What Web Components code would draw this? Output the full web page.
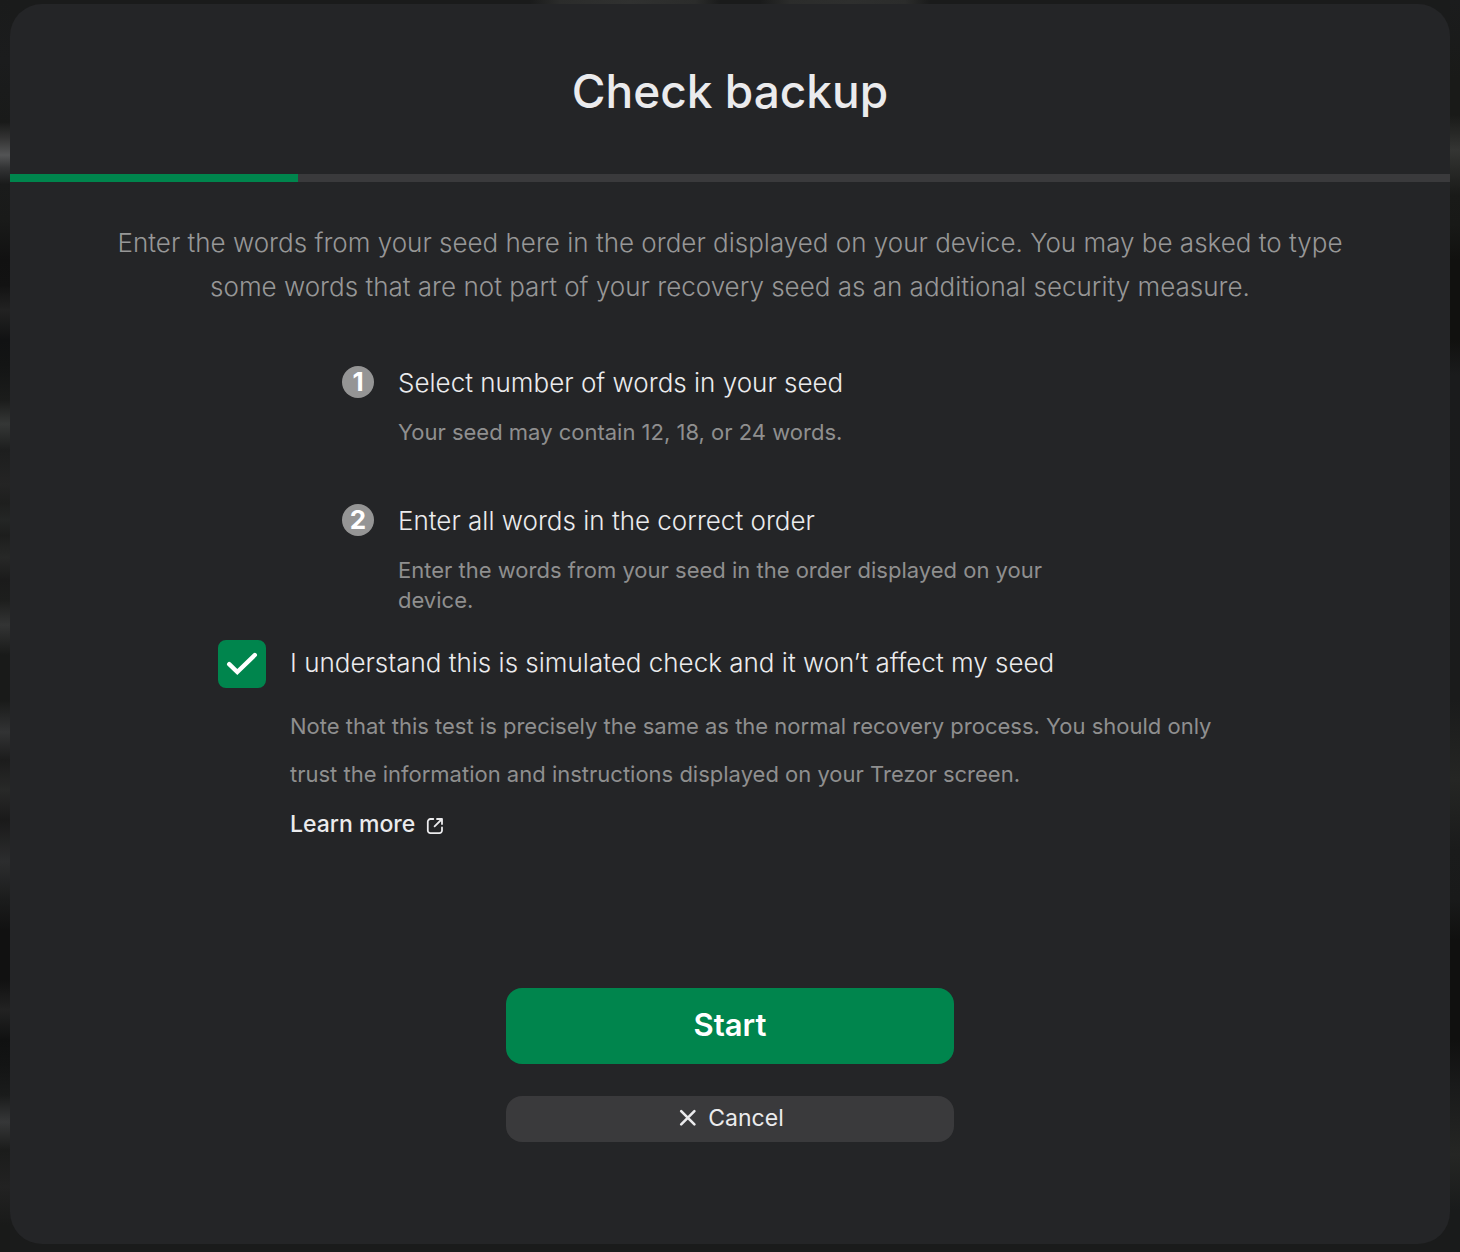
<!DOCTYPE html>
<html lang="en">
<head>
<meta charset="utf-8">
<meta name="viewport" content="width=device-width, initial-scale=1">
<title>Check backup</title>
<style>
  :root {
    --surface: #242527;
    --raised: #3a3a3c;
    --green: #00854d;
    --text: #ebebed;
    --muted: #8f8f8f;
  }
  body {
    margin: 0;
    background: #1a1b1b;
    color: var(--text);
    font-family: Inter, "Liberation Sans", sans-serif;
    font-weight: 300;
  }
</style>
</head>
<body>
<modal-backdrop>
  <modal-card>
    <h1 slot="heading">Check backup</h1>
    <step-progress slot="progress" value="1" max="5"></step-progress>
    <intro-text>Enter the words from your seed here in the order displayed on your device. You may be asked to type some words that are not part of your recovery seed as an additional security measure.</intro-text>
    <step-list>
      <step-item number="1">
        Select number of words in your seed
        <span slot="detail">Your seed may contain 12, 18, or 24 words.</span>
      </step-item>
      <step-item number="2">
        Enter all words in the correct order
        <span slot="detail">Enter the words from your seed in the order displayed on your device.</span>
      </step-item>
    </step-list>
    <consent-check>
      I understand this is simulated check and it won’t affect my seed
      <span slot="note">Note that this test is precisely the same as the normal recovery process. You should only trust the information and instructions displayed on your Trezor screen.</span>
      <external-link slot="link" href="#learn">Learn more</external-link>
    </consent-check>
    <action-button slot="actions" variant="primary">Start</action-button>
    <action-button slot="actions" variant="secondary" icon="cross">Cancel</action-button>
  </modal-card>
</modal-backdrop>

<script>
  const define = (name, html, setup) => {
    const template = document.createElement('template');
    template.innerHTML = html;
    customElements.define(name, class extends HTMLElement {
      constructor() {
        super();
        this.attachShadow({ mode: 'open' }).append(template.content.cloneNode(true));
      }
      connectedCallback() {
        if (setup) setup(this, this.shadowRoot);
      }
    });
  };

  // Dimmed page behind the dialog, with its out-of-focus content along the edges.
  define('modal-backdrop', `
    <style>
      :host {
        display: block;
        box-sizing: border-box;
        min-height: 100vh;
        padding: 4px 10px 8px;
        background:
          linear-gradient(90deg, transparent 530px, #2b2c2b 560px, #303130 630px, #2b2c2b 695px, transparent 720px, transparent 760px, #2b2c2b 790px, #2e2f2e 850px, #2b2c2b 905px, transparent 930px) 0 0 / 100% 4px no-repeat,
          linear-gradient(#1a1b1b 0, #1b1c1d 60px, #191a19 122px, #333 138px, #535455 155px, #333435 168px, #1a1b1b 184px, #191a19 220px, #111 260px, #121212 285px, #222 310px, #111213 340px, #131414 365px, #1b1c1b 400px, #353736 424px, #1d1e1e 450px, #242424 484px, #1e1f1e 503px, #242625 520px, #1d1e1d 535px, #272827 557px, #1b1b1b 580px, #1d1e1d 600px, #333434 625px, #191a19 655px, #191a19 700px, #323334 732px, #1c1c1c 760px, #282928 790px, #1a1a1a 820px, #2c2d2e 862px, #1b1c1c 900px, #111 930px, #111 980px, #222 1010px, #101111 1040px, #131414 1065px, #1a1b1b 1095px, #363738 1122px, #1b1c1b 1150px, #222 1187px, #191a19 1225px) 0 0 / 10px 100% no-repeat,
          linear-gradient(#1b1c1d 0, #191a18 80px, #191a18 115px, #343533 150px, #191a18 195px, #181917 225px, #11110f 260px, #11110f 340px, #1a1b1c 375px, #1a1b1b 700px, #252624 780px, #1a1b1b 850px, #191a1a 900px, #10100f 940px, #10100f 1040px, #191a1a 1085px, #252624 1155px, #191b1b 1210px) 100% 0 / 10px 100% no-repeat,
          #1a1b1b;
      }
    </style>
    <slot></slot>`);

  define('modal-card', `
    <style>
      :host { display: block; }
      section {
        display: flex;
        flex-direction: column;
        box-sizing: border-box;
        min-height: calc(100vh - 12px);
        background: var(--surface);
        border-radius: 32px;
        overflow: hidden;
      }
      header { padding: 55px 32px 51px; text-align: center; }
      ::slotted(h1) { margin: 0; font-size: 46px; line-height: 64px; font-weight: 500; }
      main { display: flex; flex-direction: column; align-items: center; padding: 39px 80px 0; }
      footer {
        display: flex;
        flex-direction: column;
        align-items: center;
        gap: 32px;
        margin-top: auto;
        padding: 32px 32px 102px;
      }
    </style>
    <section role="dialog" aria-label="Check backup">
      <header><slot name="heading"></slot></header>
      <slot name="progress"></slot>
      <main><slot></slot></main>
      <footer><slot name="actions"></slot></footer>
    </section>`);

  define('step-progress', `
    <style>
      :host { display: block; }
      progress { display: block; width: 100%; height: 8px; border: 0; appearance: none; -webkit-appearance: none; background: var(--raised); }
      progress::-webkit-progress-bar { background: var(--raised); }
      progress::-webkit-progress-value { background: var(--green); }
    </style>
    <progress aria-label="Progress"></progress>`,
    (host, root) => {
      const bar = root.querySelector('progress');
      bar.max = Number(host.getAttribute('max'));
      bar.value = Number(host.getAttribute('value'));
    });

  define('intro-text', `
    <style>
      :host { display: block; max-width: 1260px; }
      p { margin: 0; color: #979797; font-size: 26px; line-height: 44px; text-align: center; }
    </style>
    <p><slot></slot></p>`);

  define('step-list', `
    <style>
      :host { display: block; width: 100%; max-width: 776px; margin-top: 52px; }
      div { display: flex; flex-direction: column; gap: 52px; }
    </style>
    <div role="list"><slot></slot></div>`);

  define('step-item', `
    <style>
      :host { display: block; }
      .row { display: flex; align-items: flex-start; gap: 24px; }
      .badge {
        flex: none;
        width: 32px;
        margin-top: 5px;
        border-radius: 50%;
        background: #959595;
        color: #fff;
        font-size: 26px;
        line-height: 32px;
        font-weight: 700;
        text-align: center;
      }
      .title { font-size: 26px; line-height: 44px; }
      .detail { max-width: 700px; margin-top: 12px; color: var(--muted); font-size: 22px; line-height: 30px; font-weight: 400; }
    </style>
    <div class="row" role="listitem">
      <div class="badge"></div>
      <div>
        <div class="title"><slot></slot></div>
        <div class="detail"><slot name="detail"></slot></div>
      </div>
    </div>`,
    (host, root) => { root.querySelector('.badge').textContent = host.getAttribute('number'); });

  define('consent-check', `
    <style>
      :host { display: block; width: 100%; max-width: 1024px; margin-top: 25px; }
      .grid { display: grid; grid-template-columns: 48px 1fr; column-gap: 24px; }
      .box { display: grid; width: 48px; height: 48px; }
      .box > * { grid-area: 1 / 1; }
      input { appearance: none; -webkit-appearance: none; width: 48px; height: 48px; margin: 0; border: 2px solid var(--raised); border-radius: 8px; }
      input:checked { background: var(--green); border-color: var(--green); }
      svg { width: 48px; height: 48px; visibility: hidden; pointer-events: none; }
      input:checked + svg { visibility: visible; }
      label { font-size: 26px; line-height: 46px; }
      .more { grid-column: 2; margin-top: 14px; }
      p { margin: 0; color: var(--muted); font-size: 22px; line-height: 48px; font-weight: 400; }
    </style>
    <div class="grid">
      <span class="box">
        <input type="checkbox" id="agree" checked>
        <svg viewBox="0 0 48 48" fill="none" stroke="#fff" stroke-width="4.4" stroke-linecap="round" aria-hidden="true"><path d="M11.2 24.2 19.3 32 36.8 15"/></svg>
      </span>
      <label for="agree"><slot></slot></label>
      <div class="more">
        <p><slot name="note"></slot></p>
        <slot name="link"></slot>
      </div>
    </div>`);

  define('external-link', `
    <style>
      :host { display: block; }
      a { display: inline-flex; align-items: center; gap: 12px; color: var(--text); font-size: 23px; line-height: 52px; font-weight: 500; text-decoration: none; }
      svg { width: 16px; height: 16px; margin-top: 4px; overflow: visible; }
    </style>
    <a><slot></slot><svg viewBox="0 0 16 16" fill="none" stroke="currentColor" stroke-width="1.8" stroke-linecap="round" stroke-linejoin="round" aria-hidden="true"><path d="M6.3 1H3.4A2.6 2.6 0 0 0 .8 3.6v9A2.6 2.6 0 0 0 3.4 15.2h9a2.6 2.6 0 0 0 2.6-2.6V9.4M10 1h5v5M15 1 7.6 8.4"/></svg></a>`,
    (host, root) => { root.querySelector('a').href = host.getAttribute('href'); });

  define('action-button', `
    <style>
      :host { display: block; width: 100%; max-width: 448px; }
      button {
        display: flex;
        align-items: center;
        justify-content: center;
        gap: 8px;
        width: 100%;
        border: 0;
        border-radius: 16px;
        font-family: inherit;
        cursor: pointer;
      }
      :host([variant="primary"]) button { padding: 15px 16px 17px; background: var(--green); color: #fff; font-size: 31px; line-height: 44px; font-weight: 600; }
      :host([variant="secondary"]) button { padding: 7px 16px 9px; background: var(--raised); color: var(--text); font-size: 23px; line-height: 30px; font-weight: 400; }
      svg { display: none; width: 24px; height: 24px; }
      :host([icon="cross"]) svg { display: block; }
    </style>
    <button type="button"><svg viewBox="0 0 24 24" fill="none" stroke="currentColor" stroke-width="2.6" stroke-linecap="round" aria-hidden="true"><path d="M5.2 5.2 18.4 18.4M18.4 5.2 5.2 18.4"/></svg><slot></slot></button>`);
</script>
</body>
</html>
